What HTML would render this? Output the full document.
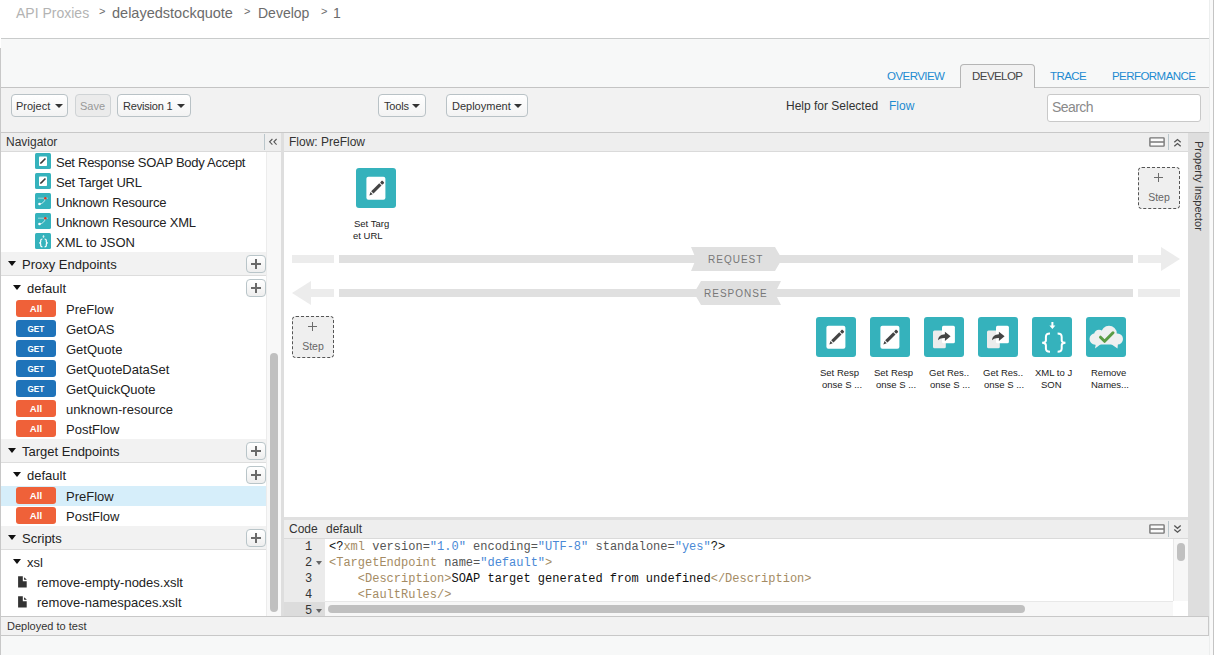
<!DOCTYPE html>
<html><head><meta charset="utf-8">
<style>
*{box-sizing:border-box;margin:0;padding:0}
html,body{width:1214px;height:655px;overflow:hidden;background:#fff}
body{position:relative;font-family:"Liberation Sans",sans-serif;color:#333}
.a{position:absolute}
.t{position:absolute;white-space:pre;line-height:1}
/* top */
#crumb{left:0;top:0;width:1214px;height:38px;background:#fff}
#hl1{left:1px;top:38px;width:1208px;height:1px;background:#c9cbcb}
#upper{left:1px;top:39px;width:1208px;height:48px;background:#f7f8f8}
#tabline{left:1px;top:87px;width:1208px;height:1px;background:#c4c4c4}
#toolbar{left:1px;top:88px;width:1208px;height:44px;background:#f2f2f2}
#hl2{left:1px;top:132px;width:1208px;height:1px;background:#c8c8c8}
#lborder{left:0;top:48px;width:1px;height:607px;background:#c8c8c8}
#rborder1{left:1209px;top:0;width:1px;height:655px;background:#eceeee}
#rborder2{left:1213px;top:0;width:1px;height:655px;background:#c4c4c4}
.tab{position:absolute;top:71px;font-size:11.5px;letter-spacing:-0.55px;color:#1d8bd1;white-space:pre;line-height:1}
.btn{position:absolute;top:94px;height:23px;border:1px solid #b9c2c6;border-radius:4px;background:linear-gradient(#fff,#f3f3f3);font-size:11px;color:#333}
.btn span{position:absolute;top:6px;white-space:pre;line-height:1}
.caret{position:absolute;top:9px;width:0;height:0;border-left:4px solid transparent;border-right:4px solid transparent;border-top:4px solid #333}

.nt{font-size:13px;color:#222}
.nicon{width:16px;height:16px;border-radius:2px;background:#35b0bb}
.tri{width:0;height:0;border-left:4px solid transparent;border-right:4px solid transparent;border-top:5px solid #111}
.plus{width:20px;height:18px;border:1px solid #b9c5c9;border-radius:4px;background:linear-gradient(#fff,#eeeeee)}
.plus:before{content:"";position:absolute;left:4px;top:7px;width:10px;height:1.6px;background:#6a6a6a}
.plus:after{content:"";position:absolute;left:8.2px;top:3px;width:1.6px;height:10px;background:#6a6a6a}
.badge{width:40px;height:17px;border-radius:3px;color:#fff;font-size:9.6px;font-weight:bold;text-align:center;line-height:17.5px}
.ball{background:#ef6139}
.bget{background:#1f73b9;font-size:9.6px}
.file{width:9px;height:11px}

.picon{width:40px;height:40px;border-radius:3px;background:#35b2bd}
.pw{position:absolute;left:10px;top:9px;width:19px;height:23px;border-radius:2px;background:#fff}
.plab{font-size:9.5px;color:#222}
.step{width:42px;height:42px;border:1px dashed #555;border-radius:4px;background:#efefef}
.sp{position:absolute;left:15.4px;top:5.4px;width:8.6px;height:8.6px;font-size:0}
.sp:before{content:"";position:absolute;left:0;top:3.6px;width:8.6px;height:1.4px;background:#6c6c6c}
.sp:after{content:"";position:absolute;left:3.6px;top:0;width:1.4px;height:8.6px;background:#6c6c6c}
.st{position:absolute;left:0;top:24px;width:40px;text-align:center;font-size:10.5px;color:#666;line-height:1}
.blab{font-size:10px;letter-spacing:1px;color:#777}

.cl{position:absolute;left:0;white-space:pre;font-family:"Liberation Mono",monospace;font-size:12px;line-height:16px;height:16px;color:#444}
.k{color:#111}.g{color:#a48b63}.at{color:#555}.s{color:#4a89d6}
.ln{font-family:"Liberation Mono",monospace;font-size:12px;color:#333}
.fold{width:0;height:0;border-left:3px solid transparent;border-right:3px solid transparent;border-top:4px solid #666}
</style></head><body>
<div class="a" id="crumb"></div>
<div class="t" style="left:16px;top:6px;font-size:14px;color:#b3b3b3">API Proxies</div>
<div class="t" style="left:99px;top:6px;font-size:11px;color:#6b6b6b">&gt;</div>
<div class="t" style="left:112px;top:6px;font-size:14.5px;color:#6b6b6b">delayedstockquote</div>
<div class="t" style="left:244px;top:6px;font-size:11px;color:#6b6b6b">&gt;</div>
<div class="t" style="left:258px;top:6px;font-size:14px;color:#6b6b6b">Develop</div>
<div class="t" style="left:321px;top:6px;font-size:11px;color:#6b6b6b">&gt;</div>
<div class="t" style="left:333px;top:6px;font-size:14px;color:#6b6b6b">1</div>

<div class="a" id="hl1"></div>
<div class="a" id="upper"></div>
<div class="a" id="toolbar"></div>
<div class="a" id="tabline"></div>
<div class="a" id="hl2"></div>
<div class="a" id="lborder"></div>
<div class="a" id="rborder1"></div>
<div class="a" style="left:1210px;top:0;width:3px;height:655px;background:#f9f9f9"></div>
<div class="a" id="rborder2"></div>

<!-- tabs -->
<div class="tab" style="left:887px;">OVERVIEW</div>
<div class="a" style="left:960px;top:64px;width:75px;height:24px;border:1px solid #b5b5b5;border-bottom:none;border-radius:4px 4px 0 0;background:#f2f2f2"></div>
<div class="tab" style="left:972px;color:#444">DEVELOP</div>
<div class="tab" style="left:1050px;">TRACE</div>
<div class="tab" style="left:1112px;">PERFORMANCE</div>

<!-- toolbar -->
<div class="btn" style="left:11px;width:57px"><span style="left:4px">Project</span><i class="caret" style="left:43px"></i></div>
<div class="btn" style="left:75px;width:36px;background:#ebebeb;border-color:#cfd3d5;color:#999"><span style="left:4px">Save</span></div>
<div class="btn" style="left:117px;width:74px"><span style="left:5px;letter-spacing:-0.2px">Revision 1</span><i class="caret" style="left:59px"></i></div>
<div class="btn" style="left:378px;width:48px"><span style="left:5px;letter-spacing:-0.2px">Tools</span><i class="caret" style="left:33px"></i></div>
<div class="btn" style="left:446px;width:82px"><span style="left:5px">Deployment</span><i class="caret" style="left:67px"></i></div>
<div class="t" style="left:786px;top:100px;font-size:12px;color:#333">Help for Selected</div>
<div class="t" style="left:889px;top:100px;font-size:12px;color:#1d8bd1">Flow</div>
<div class="a" style="left:1047px;top:94px;width:154px;height:28px;border:1px solid #c9c9c9;border-radius:3px;background:#fff"></div>
<div class="t" style="left:1052px;top:100px;font-size:14px;letter-spacing:-0.55px;color:#8a8a8a">Search</div>


<!-- ===== NAVIGATOR ===== -->
<div class="a" style="left:1px;top:133px;width:280px;height:18px;background:#eeeeee"></div>
<div class="a" style="left:1px;top:151px;width:280px;height:1px;background:#dadada"></div>
<div class="t" style="left:6px;top:136px;font-size:12px;color:#333">Navigator</div>
<div class="a" style="left:264px;top:134px;width:1px;height:16px;background:#bac6cb"></div>
<svg class="a" style="left:266px;top:136px;z-index:2" width="14" height="12" viewBox="0 0 14 12"><path d="M6.4 3 L3.6 5.8 L6.4 8.7 M10.6 3 L7.9 5.8 L10.6 8.7" fill="none" stroke="#555" stroke-width="1.1"/></svg>
<div class="a" style="left:1px;top:152px;width:265px;height:464px;background:#fff"></div>
<div class="a" style="left:266px;top:133px;width:15px;height:18px;background:#eeeeee;z-index:1"></div>
<div class="a" style="left:266px;top:152px;width:15px;height:464px;background:#f8f8f8;border-left:1px solid #ececec"></div>
<div class="a" style="left:270px;top:353px;width:8px;height:259px;border-radius:4px;background:#c0c0c0"></div>
<div class="a" style="left:281px;top:133px;width:3px;height:483px;background:#dedede"></div>
<div class="a" style="left:35px;top:153px;width:16px;height:16px"><svg width="16" height="16" viewBox="0 0 16 16"><rect width="16" height="16" rx="1.5" fill="#35b2bc"/><rect x="4" y="3.5" width="8" height="9.5" rx="0.8" fill="#fff"/><path d="M4.9 11.1 L5.6 9.3 L9.9 5 L11 6.1 L6.7 10.4 Z" fill="#3a3a3a"/></svg></div>
<div class="t nt" style="left:56px;top:156px;letter-spacing:-0.27px">Set Response SOAP Body Accept</div>
<div class="a" style="left:35px;top:173px;width:16px;height:16px"><svg width="16" height="16" viewBox="0 0 16 16"><rect width="16" height="16" rx="1.5" fill="#35b2bc"/><rect x="4" y="3.5" width="8" height="9.5" rx="0.8" fill="#fff"/><path d="M4.9 11.1 L5.6 9.3 L9.9 5 L11 6.1 L6.7 10.4 Z" fill="#3a3a3a"/></svg></div>
<div class="t nt" style="left:56px;top:176px;letter-spacing:-0.2px">Set Target URL</div>
<div class="a" style="left:35px;top:193px;width:16px;height:16px"><svg width="16" height="16" viewBox="0 0 16 16"><rect width="16" height="16" rx="1.5" fill="#35b2bc"/><path d="M3 5.2 H13" stroke="#9ed9de" stroke-width="1"/><path d="M10.3 5.2 C10 8.5 7.5 10.8 4.5 11" fill="none" stroke="#d8f0f2" stroke-width="0.9"/><circle cx="10.3" cy="5.2" r="1.2" fill="#dc341e"/><circle cx="4.5" cy="11" r="1.3" fill="#fff"/></svg></div>
<div class="t nt" style="left:56px;top:196px;letter-spacing:-0.2px">Unknown Resource</div>
<div class="a" style="left:35px;top:213px;width:16px;height:16px"><svg width="16" height="16" viewBox="0 0 16 16"><rect width="16" height="16" rx="1.5" fill="#35b2bc"/><path d="M3 5.2 H13" stroke="#9ed9de" stroke-width="1"/><path d="M10.3 5.2 C10 8.5 7.5 10.8 4.5 11" fill="none" stroke="#d8f0f2" stroke-width="0.9"/><circle cx="10.3" cy="5.2" r="1.2" fill="#dc341e"/><circle cx="4.5" cy="11" r="1.3" fill="#fff"/></svg></div>
<div class="t nt" style="left:56px;top:216px;letter-spacing:-0.2px">Unknown Resource XML</div>
<div class="a" style="left:35px;top:233px;width:16px;height:16px"><svg width="16" height="16" viewBox="0 0 16 16"><rect width="16" height="16" rx="1.5" fill="#35b2bc"/><path d="M7.9 2.3 H9.1 V3.6 H9.9 L8.5 5.1 L7.1 3.6 H7.9 Z" fill="#d8f0f2"/>
<path d="M7.4 6 C6.2 6 5.7 6.4 5.7 7.4 V9 C5.7 9.5 5.2 9.8 4.2 9.9 C5.2 10 5.7 10.3 5.7 10.8 V12.4 C5.7 13.4 6.2 13.8 7.4 13.8" fill="none" stroke="#fff" stroke-width="1.2"/>
<path d="M9.6 6 C10.8 6 11.3 6.4 11.3 7.4 V9 C11.3 9.5 11.8 9.8 12.8 9.9 C11.8 10 11.3 10.3 11.3 10.8 V12.4 C11.3 13.4 10.8 13.8 9.6 13.8" fill="none" stroke="#fff" stroke-width="1.2"/></svg></div>
<div class="t nt" style="left:56px;top:236px">XML to JSON</div>
<div class="a" style="left:1px;top:252px;width:265px;height:24px;background:#f2f2f2;border-bottom:1px solid #dddddd"></div>
<i class="a tri" style="left:8px;top:261px"></i>
<div class="t nt" style="left:22px;top:258px">Proxy Endpoints</div>
<div class="a plus" style="left:246px;top:255px"></div>
<i class="a tri" style="left:13px;top:285px"></i>
<div class="t nt" style="left:27px;top:282px">default</div>
<div class="a plus" style="left:246px;top:279px"></div>
<div class="a badge ball" style="left:16px;top:300px">All</div>
<div class="t nt" style="left:66px;top:303px">PreFlow</div>
<div class="a badge bget" style="left:16px;top:320px"><span style="display:inline-block;transform:scaleX(0.85)">GET</span></div>
<div class="t nt" style="left:66px;top:323px">GetOAS</div>
<div class="a badge bget" style="left:16px;top:340px"><span style="display:inline-block;transform:scaleX(0.85)">GET</span></div>
<div class="t nt" style="left:66px;top:343px">GetQuote</div>
<div class="a badge bget" style="left:16px;top:360px"><span style="display:inline-block;transform:scaleX(0.85)">GET</span></div>
<div class="t nt" style="left:66px;top:363px">GetQuoteDataSet</div>
<div class="a badge bget" style="left:16px;top:380px"><span style="display:inline-block;transform:scaleX(0.85)">GET</span></div>
<div class="t nt" style="left:66px;top:383px">GetQuickQuote</div>
<div class="a badge ball" style="left:16px;top:400px">All</div>
<div class="t nt" style="left:66px;top:403px">unknown-resource</div>
<div class="a badge ball" style="left:16px;top:420px">All</div>
<div class="t nt" style="left:66px;top:423px">PostFlow</div>
<div class="a" style="left:1px;top:439px;width:265px;height:24px;background:#f2f2f2;border-bottom:1px solid #dddddd"></div>
<i class="a tri" style="left:8px;top:448px"></i>
<div class="t nt" style="left:22px;top:445px">Target Endpoints</div>
<div class="a plus" style="left:246px;top:442px"></div>
<i class="a tri" style="left:13px;top:472px"></i>
<div class="t nt" style="left:27px;top:469px">default</div>
<div class="a plus" style="left:246px;top:466px"></div>
<div class="a" style="left:1px;top:486px;width:265px;height:20px;background:#d6eefa"></div>
<div class="a badge ball" style="left:16px;top:487px">All</div>
<div class="t nt" style="left:66px;top:490px">PreFlow</div>
<div class="a badge ball" style="left:16px;top:507px">All</div>
<div class="t nt" style="left:66px;top:510px">PostFlow</div>
<div class="a" style="left:1px;top:526px;width:265px;height:24px;background:#f2f2f2;border-bottom:1px solid #dddddd"></div>
<i class="a tri" style="left:8px;top:535px"></i>
<div class="t nt" style="left:22px;top:532px">Scripts</div>
<div class="a plus" style="left:246px;top:529px"></div>
<i class="a tri" style="left:13px;top:559px"></i>
<div class="t nt" style="left:27px;top:556px">xsl</div>
<svg class="a" style="left:18px;top:576px" width="9" height="12" viewBox="0 0 9 12"><path d="M0.1 0.2 H4.8 V5.3 H8.7 V11.5 H0.1 Z" fill="#333"/><path d="M6.1 1.2 V3.7 H8.9 Z" fill="#222"/></svg>
<div class="t nt" style="left:37px;top:576px">remove-empty-nodes.xslt</div>
<svg class="a" style="left:18px;top:596px" width="9" height="12" viewBox="0 0 9 12"><path d="M0.1 0.2 H4.8 V5.3 H8.7 V11.5 H0.1 Z" fill="#333"/><path d="M6.1 1.2 V3.7 H8.9 Z" fill="#222"/></svg>
<div class="t nt" style="left:37px;top:596px">remove-namespaces.xslt</div>

<!-- ===== FLOW PANEL ===== -->
<div class="a" style="left:284px;top:133px;width:904px;height:18px;background:#eeeeee"></div>
<div class="a" style="left:284px;top:151px;width:904px;height:1px;background:#dadada"></div>
<div class="t" style="left:289px;top:136px;font-size:12px;color:#333">Flow: PreFlow</div>
<svg class="a" style="left:1149px;top:137px" width="16" height="10" viewBox="0 0 16 10"><rect x="0.9" y="0.9" width="14.2" height="8.2" rx="0.5" fill="#fbfbfb" stroke="#777" stroke-width="1.4"/><rect x="1" y="4.2" width="14" height="1.6" fill="#808080"/></svg>
<div class="a" style="left:1168px;top:134px;width:1px;height:16px;background:#bac6cb"></div>
<svg class="a" style="left:1173px;top:138px" width="9" height="10" viewBox="0 0 9 10"><path d="M1.3 4.3 L4.5 1.6 L7.7 4.3 M1.3 8.2 L4.5 5.5 L7.7 8.2" fill="none" stroke="#555" stroke-width="1.3"/></svg>
<div class="a" style="left:284px;top:152px;width:904px;height:365px;background:#fff"></div>

<!-- policy: Set Target URL -->
<div class="a" style="left:356px;top:168px;width:40px;height:40px"><svg width="40" height="40" viewBox="0 0 40 40"><rect width="40" height="40" rx="3" fill="#35b2bc"/><rect x="10.4" y="8.7" width="19" height="23" rx="2" fill="#fff"/>
<g transform="translate(20.3 20.5) rotate(-45)"><path d="M-9.8 0 L-6.6 -1.6 V1.6 Z" fill="#444"/><rect x="-5.6" y="-1.6" width="11.4" height="3.2" fill="#444"/><rect x="6.8" y="-1.6" width="3" height="3.2" rx="0.6" fill="#444"/></g></svg></div>
<div class="t plab" style="left:354px;top:219px">Set Targ</div>
<div class="t plab" style="left:353px;top:231px">et URL</div>

<!-- step boxes -->
<div class="a step" style="left:1138px;top:167px"><div class="sp">+</div><div class="st">Step</div></div>
<div class="a step" style="left:292px;top:316px"><div class="sp">+</div><div class="st">Step</div></div>

<!-- bars -->
<div class="a" style="left:292px;top:255px;width:42px;height:8px;background:#ececec"></div>
<div class="a" style="left:339px;top:255px;width:794px;height:8px;background:#e0e0e0"></div>
<svg class="a" style="left:1138px;top:247px" width="43" height="25"><path d="M0 8 H23 V0 L42 12 L23 24 V16 H0 Z" fill="#ececec"/></svg>
<svg class="a" style="left:691px;top:247px" width="92" height="24"><path d="M0 0 H84 L91 12 L84 24 H0 L5 12 Z" fill="#e0e0e0"/></svg>
<div class="t blab" style="left:708px;top:255px">REQUEST</div>

<svg class="a" style="left:292px;top:281px" width="43" height="25"><path d="M42 8 H19 V0 L0 12 L19 24 V16 H42 Z" fill="#ececec"/></svg>
<div class="a" style="left:339px;top:289px;width:794px;height:8px;background:#e0e0e0"></div>
<div class="a" style="left:1138px;top:289px;width:42px;height:8px;background:#ececec"></div>
<svg class="a" style="left:694px;top:281px" width="88" height="24"><path d="M0 12 L7 0 H87 L81 12 L87 24 H7 Z" fill="#e0e0e0"/></svg>
<div class="t blab" style="left:704px;top:289px">RESPONSE</div>
<div class="a" style="left:816px;top:317px;width:40px;height:40px"><svg width="40" height="40" viewBox="0 0 40 40"><rect width="40" height="40" rx="3" fill="#35b2bc"/><rect x="10.4" y="8.7" width="19" height="23" rx="2" fill="#fff"/>
<g transform="translate(20.3 20.5) rotate(-45)"><path d="M-9.8 0 L-6.6 -1.6 V1.6 Z" fill="#444"/><rect x="-5.6" y="-1.6" width="11.4" height="3.2" fill="#444"/><rect x="6.8" y="-1.6" width="3" height="3.2" rx="0.6" fill="#444"/></g></svg></div>
<div class="t plab" style="left:820px;top:368px">Set Resp</div>
<div class="t plab" style="left:822px;top:380px">onse S ...</div>
<div class="a" style="left:870px;top:317px;width:40px;height:40px"><svg width="40" height="40" viewBox="0 0 40 40"><rect width="40" height="40" rx="3" fill="#35b2bc"/><rect x="10.4" y="8.7" width="19" height="23" rx="2" fill="#fff"/>
<g transform="translate(20.3 20.5) rotate(-45)"><path d="M-9.8 0 L-6.6 -1.6 V1.6 Z" fill="#444"/><rect x="-5.6" y="-1.6" width="11.4" height="3.2" fill="#444"/><rect x="6.8" y="-1.6" width="3" height="3.2" rx="0.6" fill="#444"/></g></svg></div>
<div class="t plab" style="left:874px;top:368px">Set Resp</div>
<div class="t plab" style="left:876px;top:380px">onse S ...</div>
<div class="a" style="left:924px;top:317px;width:40px;height:40px"><svg width="40" height="40" viewBox="0 0 40 40"><rect width="40" height="40" rx="3" fill="#35b2bc"/><rect x="9" y="13.4" width="12.8" height="17.8" rx="1.5" fill="#ececec"/><rect x="18" y="8.7" width="12.9" height="17.5" rx="1.5" fill="#fff"/>
<path d="M14 23.3 C14.3 19.6 16.8 17.5 20.9 17.3 V14.8 L26.6 19.3 L20.9 23.9 V21.1 C17.8 21 15.8 21.7 14 23.3 Z" fill="#444"/></svg></div>
<div class="t plab" style="left:929px;top:368px">Get Res..</div>
<div class="t plab" style="left:930px;top:380px">onse S ...</div>
<div class="a" style="left:978px;top:317px;width:40px;height:40px"><svg width="40" height="40" viewBox="0 0 40 40"><rect width="40" height="40" rx="3" fill="#35b2bc"/><rect x="9" y="13.4" width="12.8" height="17.8" rx="1.5" fill="#ececec"/><rect x="18" y="8.7" width="12.9" height="17.5" rx="1.5" fill="#fff"/>
<path d="M14 23.3 C14.3 19.6 16.8 17.5 20.9 17.3 V14.8 L26.6 19.3 L20.9 23.9 V21.1 C17.8 21 15.8 21.7 14 23.3 Z" fill="#444"/></svg></div>
<div class="t plab" style="left:983px;top:368px">Get Res..</div>
<div class="t plab" style="left:984px;top:380px">onse S ...</div>
<div class="a" style="left:1032px;top:317px;width:40px;height:40px"><svg width="40" height="40" viewBox="0 0 40 40"><rect width="40" height="40" rx="3" fill="#35b2bc"/><path d="M19.4 5 H21.4 V8.4 H23.4 L20.4 12.1 L17.4 8.4 H19.4 Z" fill="#fff"/>
<path d="M18 16.6 C15 16.6 13.9 17.5 13.9 20 V23.4 C13.9 24.9 12.6 25.6 10.2 25.8 C12.6 26 13.9 26.7 13.9 28.2 V31.6 C13.9 34 15 34.8 18 34.8" fill="none" stroke="#fff" stroke-width="2"/>
<path d="M25.6 16.6 C28.6 16.6 29.7 17.5 29.7 20 V23.4 C29.7 24.9 31 25.6 33.4 25.8 C31 26 29.7 26.7 29.7 28.2 V31.6 C29.7 34 28.6 34.8 25.6 34.8" fill="none" stroke="#fff" stroke-width="2"/></svg></div>
<div class="t plab" style="left:1035px;top:368px">XML to J</div>
<div class="t plab" style="left:1041px;top:380px">SON</div>
<div class="a" style="left:1086px;top:317px;width:40px;height:40px"><svg width="40" height="40" viewBox="0 0 40 40"><rect width="40" height="40" rx="3" fill="#35b2bc"/>
<g fill="#eef0f0"><circle cx="9.2" cy="22" r="5.7"/><circle cx="13" cy="17.5" r="4.8"/><circle cx="23" cy="16.5" r="7.8"/><circle cx="31.5" cy="22" r="5.5"/><rect x="9" y="17" width="22" height="10.5"/><path d="M10 26 L9 31.6 L15 27 Z M32 26 L31.5 31.6 L25 27 Z"/></g>
<path d="M14.5 20.2 L18.6 24.3 L27 15.8" fill="none" stroke="#5a9c44" stroke-width="3" stroke-linecap="round" stroke-linejoin="round"/></svg></div>
<div class="t plab" style="left:1091px;top:368px">Remove</div>
<div class="t plab" style="left:1091px;top:380px">Names...</div>

<!-- splitter -->
<div class="a" style="left:284px;top:517px;width:904px;height:3px;background:#e0e0e0"></div>
<!-- code panel -->
<div class="a" style="left:284px;top:520px;width:904px;height:18px;background:#eeeeee"></div>
<div class="a" style="left:284px;top:538px;width:904px;height:1px;background:#dadada"></div>
<div class="t" style="left:289px;top:523px;font-size:12px;color:#333">Code</div>
<div class="t" style="left:326px;top:523px;font-size:12px;color:#333">default</div>
<svg class="a" style="left:1149px;top:524px" width="16" height="10" viewBox="0 0 16 10"><rect x="0.9" y="0.9" width="14.2" height="8.2" rx="0.5" fill="#fbfbfb" stroke="#777" stroke-width="1.4"/><rect x="1" y="4.2" width="14" height="1.6" fill="#808080"/></svg>
<div class="a" style="left:1168px;top:521px;width:1px;height:16px;background:#bac6cb"></div>
<svg class="a" style="left:1173px;top:524px" width="9" height="10" viewBox="0 0 9 10"><path d="M1.3 1.6 L4.5 4.3 L7.7 1.6 M1.3 5.5 L4.5 8.2 L7.7 5.5" fill="none" stroke="#555" stroke-width="1.3"/></svg>
<div class="a" style="left:284px;top:539px;width:904px;height:77px;background:#fff"></div>
<div class="a" style="left:284px;top:539px;width:41px;height:77px;background:#ebebeb"></div>
<div class="a" style="left:284px;top:602px;width:41px;height:14px;background:#dcdcdc"></div>
<div id="code" class="a" style="left:329px;top:538px;width:844px;height:63px;overflow:hidden"><div class="cl" style="top:1px"><span class="k">&lt;?</span><span class="g">xml</span> <span class="at">version=</span><span class="s">"1.0"</span> <span class="at">encoding=</span><span class="s">"UTF-8"</span> <span class="at">standalone=</span><span class="s">"yes"</span><span class="k">?&gt;</span></div>
<div class="cl" style="top:17px"><span class="g">&lt;TargetEndpoint</span> <span class="at">name=</span><span class="s">"default"</span><span class="g">&gt;</span></div>
<div class="cl" style="top:33px">    <span class="g">&lt;Description&gt;</span><span class="k">SOAP target generated from undefined</span><span class="g">&lt;/Description&gt;</span></div>
<div class="cl" style="top:49px">    <span class="g">&lt;FaultRules/&gt;</span></div></div>
<div class="t ln" style="left:305px;top:541px">1</div>
<div class="t ln" style="left:305px;top:557px">2</div>
<div class="t ln" style="left:305px;top:573px">3</div>
<div class="t ln" style="left:305px;top:589px">4</div>
<div class="t ln" style="left:305px;top:605px">5</div>
<i class="a fold" style="left:316px;top:561px"></i><i class="a fold" style="left:316px;top:609px"></i>

<div class="a" style="left:325px;top:601px;width:848px;height:15px;background:#f7f7f7;border-top:1px solid #e8e8e8"></div>
<div class="a" style="left:328px;top:605px;width:697px;height:8px;border-radius:4px;background:#c0c0c0"></div>
<div class="a" style="left:1173px;top:539px;width:15px;height:62px;background:#f7f7f7;border-left:1px solid #e8e8e8"></div>
<div class="a" style="left:1177px;top:543px;width:8px;height:18px;border-radius:4px;background:#c0c0c0"></div>
<div class="a" style="left:284px;top:616px;width:925px;height:1px;background:#c8c8c8"></div>

<!-- property inspector -->
<div class="a" style="left:1188px;top:133px;width:21px;height:483px;background:#dedede"></div>
<div class="t" style="left:1204px;top:141px;font-size:11px;color:#333;transform-origin:0 0;transform:rotate(90deg)">Property Inspector</div>

<!-- status -->
<div class="a" style="left:1px;top:616px;width:1208px;height:20px;background:#f2f2f2;border-top:1px solid #c8c8c8;border-bottom:1px solid #c8c8c8;border-right:1px solid #c8c8c8"></div>
<div class="t" style="left:7px;top:621px;font-size:11px;color:#333">Deployed to test</div>
<div class="a" style="left:1px;top:636px;width:1208px;height:19px;background:#f7f8f8"></div>
</body></html>
